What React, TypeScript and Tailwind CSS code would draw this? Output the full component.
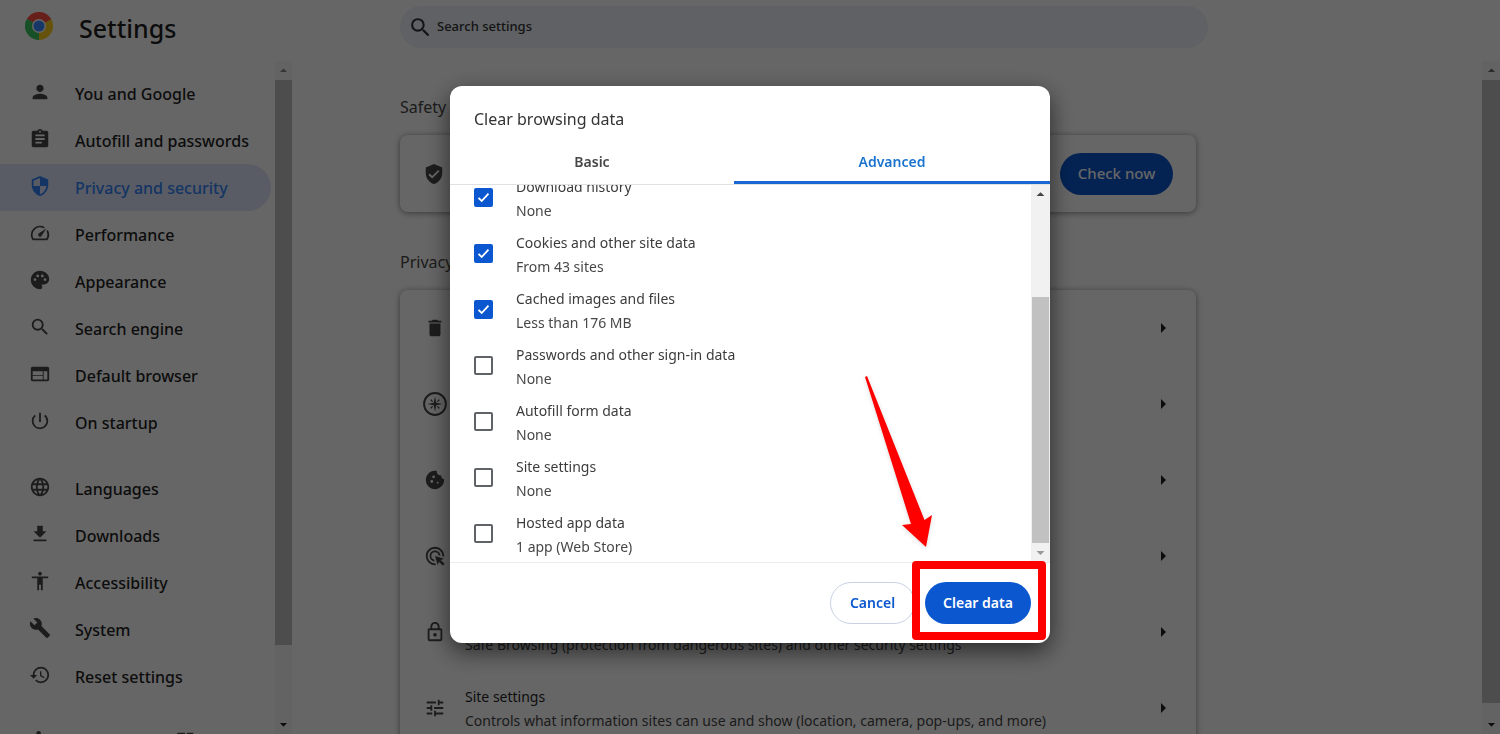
import React, { useState } from 'react'
import {
  MdAccessibility,
  MdAdsClick,
  MdArrowDropDown,
  MdArrowDropUp,
  MdArrowRight,
  MdAssignment,
  MdBuild,
  MdCookie,
  MdDelete,
  MdExtension,
  MdFileDownload,
  MdHistory,
  MdLanguage,
  MdOpenInNew,
  MdOutlineLock,
  MdOutlineSpeed,
  MdPalette,
  MdPerson,
  MdPowerSettingsNew,
  MdSearch,
  MdSecurity,
  MdTune,
  MdVerifiedUser,
  MdWeb,
} from 'react-icons/md'

type Item = { label: string; icon: React.ElementType }

const primaryNav: Item[] = [
  { label: 'You and Google', icon: MdPerson },
  { label: 'Autofill and passwords', icon: MdAssignment },
  { label: 'Privacy and security', icon: MdSecurity },
  { label: 'Performance', icon: MdOutlineSpeed },
  { label: 'Appearance', icon: MdPalette },
  { label: 'Search engine', icon: MdSearch },
  { label: 'Default browser', icon: MdWeb },
  { label: 'On startup', icon: MdPowerSettingsNew },
]

const secondaryNav: Item[] = [
  { label: 'Languages', icon: MdLanguage },
  { label: 'Downloads', icon: MdFileDownload },
  { label: 'Accessibility', icon: MdAccessibility },
  { label: 'System', icon: MdBuild },
  { label: 'Reset settings', icon: MdHistory },
]

const GuideIcon = ({ className }: { className?: string }) => (
  <svg viewBox="1 1 22 22" className={className} fill="none" stroke="currentColor" strokeWidth="1.8">
    <circle cx="12" cy="12" r="10" />
    <path d="M12 5l1.1 5.9L19 12l-5.9 1.1L12 19l-1.1-5.9L5 12l5.9-1.1z" fill="currentColor" stroke="none" />
    <path d="M8 8l1.8 1.8M16 8l-1.8 1.8M8 16l1.8-1.8M16 16l-1.8-1.8" strokeWidth="1.2" />
  </svg>
)

const privacyRows: { name: string; title?: string; detail?: string; icon: React.ElementType }[] = [
  { name: 'Clear browsing data', icon: MdDelete },
  { name: 'Privacy Guide', icon: GuideIcon },
  { name: 'Third-party cookies', icon: MdCookie },
  { name: 'Ad privacy', icon: MdAdsClick },
  { name: 'Security', detail: 'Safe Browsing (protection from dangerous sites) and other security settings', icon: MdOutlineLock },
  { name: 'Site settings', title: 'Site settings', detail: 'Controls what information sites can use and show (location, camera, pop-ups, and more)', icon: MdTune },
]

const dataTypes = [
  { id: 'downloads', title: 'Download history', detail: 'None', checked: true },
  { id: 'cookies', title: 'Cookies and other site data', detail: 'From 43 sites', checked: true },
  { id: 'cache', title: 'Cached images and files', detail: 'Less than 176 MB', checked: true },
  { id: 'passwords', title: 'Passwords and other sign-in data', detail: 'None', checked: false },
  { id: 'autofill', title: 'Autofill form data', detail: 'None', checked: false },
  { id: 'site', title: 'Site settings', detail: 'None', checked: false },
  { id: 'apps', title: 'Hosted app data', detail: '1 app (Web Store)', checked: false },
]

const ChromeLogo = () => (
  <svg viewBox="0 0 48 48" className="h-7 w-7 shrink-0" aria-label="Chrome">
    <path d="M24 24 L3.2 12 A24 24 0 0 1 44.8 12 Z" fill="#ff5140" />
    <path d="M24 24 L44.8 12 A24 24 0 0 1 24 48 Z" fill="#ffd01c" />
    <path d="M24 24 L24 48 A24 24 0 0 1 3.2 12 Z" fill="#3bc863" />
    <path d="M24 12 H44.8 L34.4 18 Z" fill="#ff5140" />
    <path d="M34.4 30 L24 48 L24 30 L34.4 18Z" fill="#ffd01c" />
    <path d="M13.6 30 L3.2 12 L13.6 18 L24 36 Z" fill="#3bc863" />
    <circle cx="24" cy="24" r="12" fill="#fff" />
    <circle cx="24" cy="24" r="9.5" fill="#3a8cff" />
  </svg>
)

const NavLink = ({ item, active }: { item: Item; active?: boolean }) => {
  const Icon = item.icon
  return (
    <a
      href="#"
      className={
        active
          ? 'mr-1 flex h-[47px] items-center gap-6 rounded-r-full bg-[#dee7fa] pl-[29px] text-[#3384fa]'
          : 'mr-1 flex h-[47px] items-center gap-6 pl-[29px] text-[#1f1f1f]'
      }
    >
      <Icon className={active ? 'mb-[3px] h-[22px] w-[22px] shrink-0' : 'mb-[3px] h-[22px] w-[22px] shrink-0 text-[#474747]'} />
      <span className="text-base font-medium">{item.label}</span>
    </a>
  )
}

const Sidebar = () => (
  <div className="flex w-[292px] shrink-0">
    <nav className="min-w-0 flex-1 overflow-hidden pt-[9px]">
      {primaryNav.map(item => (
        <NavLink key={item.label} item={item} active={item.label === 'Privacy and security'} />
      ))}
      <div className="h-[19px]" />
      {secondaryNav.map(item => (
        <NavLink key={item.label} item={item} />
      ))}
      <div className="h-[19px]" />
      <a href="#" aria-label="Extensions" className="flex h-[47px] items-center gap-[123px] pl-[29px] text-[#474747]">
        <MdExtension className="mb-[3px] h-[22px] w-[22px]" />
        <MdOpenInNew className="mb-[3px] h-[22px] w-[22px]" />
      </a>
    </nav>
    <div className="flex w-[17px] flex-col items-center bg-[#f8f8f8]">
      <MdArrowDropUp className="h-[19px] w-[17px] shrink-0 text-[#888]" />
      <div className="w-full flex-[566] bg-[#c1c1c1]" />
      <div className="flex-[70]" />
      <MdArrowDropDown className="h-[19px] w-[17px] shrink-0 text-[#222]" />
    </div>
  </div>
)

const Main = () => (
  <main className="min-w-0 flex-1 overflow-hidden pl-[108px] text-[#1f1f1f]">
    <div className="max-w-[796px]">
      <h2 aria-label="Safety check" className="pt-[34px] text-base leading-6 text-[#474747]">Safety</h2>
      <section className="mt-4 flex h-[77px] items-center justify-between rounded-lg px-[23px] shadow-[0_1px_6px_rgba(0,0,0,0.45)]">
        <MdVerifiedUser className="h-[22px] w-[22px] text-[#474747]" />
        <button type="button" className="h-[42px] w-[113px] rounded-full bg-[#0b57d0] text-[15px] font-medium text-white">
          Check now
        </button>
      </section>
      <h2 aria-label="Privacy and security" className="pt-[38px] text-base leading-6 text-[#474747]">Privacy</h2>
      <section className="mt-4 rounded-lg shadow-[0_1px_6px_rgba(0,0,0,0.45)]">
        {privacyRows.map(row => {
          const Icon = row.icon
          return (
            <a key={row.name} href="#" aria-label={row.name} className="flex h-[76px] items-center px-[21px]">
              <span className="grid w-7 shrink-0 place-items-center text-[#474747]">
                <Icon className={row.icon === GuideIcon ? 'h-6 w-6' : 'h-[22px] w-[22px]'} />
              </span>
              <span className="min-w-0 flex-1 pt-[2px] pl-4 text-sm leading-6">
                <span className="block h-6 truncate">{row.title}</span>
                <span className="block h-6 truncate text-[#474747]">{row.detail}</span>
              </span>
              <MdArrowRight className="h-6 w-6 shrink-0" />
            </a>
          )
        })}
      </section>
    </div>
  </main>
)

const ClearDataDialog = () => {
  const [items, setItems] = useState(dataTypes)
  const [tab, setTab] = useState<'basic' | 'advanced'>('advanced')

  const toggle = (id: string) => {
    setItems(list => list.map(d => (d.id === id ? { ...d, checked: !d.checked } : d)))
  }

  return (
    <div
      role="dialog"
      aria-label="Clear browsing data"
      className="relative w-[600px] rounded-xl bg-white text-sm text-[#474747] shadow-[0_8px_24px_rgba(0,0,0,0.6)]"
    >
      <h1 className="px-6 pt-5 text-base leading-[26px] text-[#333]">Clear browsing data</h1>
      <div role="tablist" className="mt-[6px] grid grid-cols-[284fr_316fr] border-b border-[#dfe1e5] font-semibold">
        <button
          type="button"
          role="tab"
          aria-selected={tab === 'basic'}
          onClick={() => setTab('basic')}
          className={tab === 'basic' ? 'h-[46px] border-b-3 border-[#1967d2] pt-1 text-[#1967d2]' : 'h-[46px] border-b-3 border-transparent pt-1'}
        >
          Basic
        </button>
        <button
          type="button"
          role="tab"
          aria-selected={tab === 'advanced'}
          onClick={() => setTab('advanced')}
          className={tab === 'advanced' ? 'h-[46px] border-b-3 border-[#1967d2] pt-1 text-[#1a73cf]' : 'h-[46px] border-b-3 border-transparent pt-1'}
        >
          Advanced
        </button>
      </div>
      <div className="flex h-[378px] border-b border-[#ececec]">
        <div className="flex flex-1 flex-col justify-end gap-2 overflow-hidden pb-[3px] pl-6">
          {items.map(d => (
            <label key={d.id} className="flex shrink-0 items-center gap-[23px]">
              <span className="mb-[3px] grid shrink-0 place-items-center">
                <input
                  type="checkbox"
                  checked={d.checked}
                  onChange={() => toggle(d.id)}
                  className="peer col-start-1 row-start-1 h-[19px] w-[19px] appearance-none rounded-xs border-2 border-[#5f6368] checked:border-[#0b57d0] checked:bg-[#0b57d0]"
                />
                <svg viewBox="0 0 19 19" className="pointer-events-none invisible col-start-1 row-start-1 h-[19px] w-[19px] peer-checked:visible">
                  <path d="M4.5 9.8l3.2 3.2 6.8-7.4" fill="none" stroke="#fff" strokeWidth="1.8" />
                </svg>
              </span>
              <span className="leading-6">
                <span className="block text-[#3c3c3c]">{d.title}</span>
                <span className="block">{d.detail}</span>
              </span>
            </label>
          ))}
        </div>
        <div className="flex w-[19px] flex-col items-center bg-[#f1f1f1]">
          <MdArrowDropUp className="h-[19px] w-[19px] shrink-0 text-[#444]" />
          <div className="flex-[93]" />
          <div className="w-[17px] flex-[246] bg-[#c1c1c1]" />
          <MdArrowDropDown className="h-[19px] w-[19px] shrink-0 text-[#999]" />
        </div>
      </div>
      <div className="flex justify-end gap-[10px] pt-[19px] pr-[19px] pb-[19px]">
        <button type="button" className="h-[42px] w-[85px] rounded-full border border-[#c7d3e3] font-semibold text-[#0b57d0]">
          Cancel
        </button>
        <div className="relative">
          <button type="button" className="h-[42px] w-[106px] rounded-full bg-[#0b57d0] font-semibold text-white">
            Clear data
          </button>
          <div className="pointer-events-none absolute -top-[21px] -right-[15px] -bottom-4 -left-[13px] rounded-sm border-8 border-[#fe0000]" />
          <svg viewBox="0 0 70 176" className="pointer-events-none absolute -top-[208px] -left-[61px] h-[176px] w-[70px] drop-shadow-sm">
            <path d="M1 3L3 2L60.5 146L68 141L62 173L38 151L47 150Z" fill="#fe0000" />
          </svg>
        </div>
      </div>
    </div>
  )
}

const App: React.FC = () => {
  return (
    <div className="flex h-screen flex-col overflow-hidden bg-white font-['Noto_Sans','Open_Sans',sans-serif]">
      <header className="flex h-[61px] shrink-0 items-start">
        <div className="flex w-[400px] shrink-0 items-start gap-[26px] pt-3 pl-[25px]">
          <ChromeLogo />
          <h1 className="text-[25px] leading-8 font-medium text-[#1f1f1f]">Settings</h1>
        </div>
        <label className="mt-[6px] flex h-[42px] w-full max-w-[808px] items-center gap-1 rounded-full bg-[#edf2fa] pl-2">
          <MdSearch className="h-[25px] w-[25px] text-[#333]" />
          <input
            type="search"
            aria-label="Search settings"
            placeholder="Search settings"
            className="flex-1 bg-transparent text-[13px] font-medium outline-none placeholder:text-[#333]"
          />
        </label>
      </header>
      <div className="flex min-h-0 flex-1">
        <Sidebar />
        <Main />
        <div className="flex w-[18px] shrink-0 flex-col items-center bg-[#f8f8f8]">
          <MdArrowDropUp className="h-[19px] w-[17px] shrink-0 text-[#666]" />
          <div className="w-full flex-[623] bg-[#c1c1c1]" />
          <div className="flex-[12]" />
          <MdArrowDropDown className="h-[19px] w-[17px] shrink-0 text-[#222]" />
        </div>
      </div>

      <div className="fixed inset-0 flex items-start justify-center bg-black/60 pt-[86px]">
        <ClearDataDialog />
      </div>
    </div>
  )
}

export default App
